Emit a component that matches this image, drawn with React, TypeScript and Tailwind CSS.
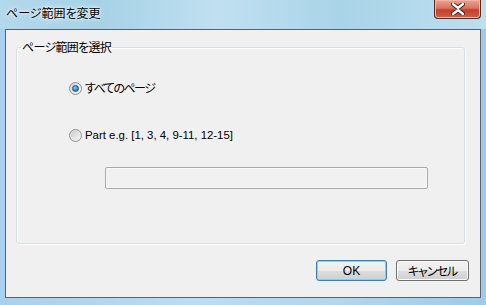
import React from "react";

const jp = "font-['Noto_Sans_CJK_JP','Noto_Sans',sans-serif] [font-feature-settings:'palt']";

function Radio({ checked }: { checked: boolean }) {
	return (
		<span className="flex h-[13px] w-[13px] shrink-0 items-center justify-center rounded-full border border-[#8e8f8f] bg-[linear-gradient(135deg,#d6d6d6,#f7f7f7)]">
			{checked ? (
				<span className="h-[7px] w-[7px] rounded-full border border-[#1a4f84] bg-[radial-gradient(circle_at_40%_35%,#8fd0f5,#2a86c8_60%,#135a9a)]" />
			) : (
				<span className="h-[9px] w-[9px] rounded-full bg-[linear-gradient(135deg,#cfcfcf,#f2f2f2)]" />
			)}
		</span>
	);
}

function Button({ label, primary }: { label: string; primary?: boolean }) {
	return (
		<button
			className={`flex h-[21px] items-center justify-center rounded-[3px] border text-[12px] font-normal text-black ${
				primary
					? "w-[71px] border-[#3c7fb1] font-['Liberation_Sans',Arial,sans-serif] shadow-[inset_0_0_0_1px_#7fd3f7]"
					: `w-[73px] border-[#707070] tracking-[-1px] shadow-[inset_0_0_0_1px_#fbfbfb] ${jp}`
			} bg-[linear-gradient(#f2f2f2_0%,#ebebeb_50%,#dddddd_51%,#cfcfcf_100%)]`}
		>
			{label}
		</button>
	);
}

export default function App() {
	return (
		<div className="flex h-[305px] w-[486px] flex-col overflow-hidden bg-[linear-gradient(90deg,#a9d0ec,#bcdcf1_40%,#b2d6ee_70%,#9fcbea)]">
			{/* title bar */}
			<div className="flex h-[29px] shrink-0 items-start justify-between bg-[linear-gradient(90deg,#b4d8ec,#a6d2e6_20%,#c0e0f1_45%,#a9d4e8_70%,#bddff0)]">
				<span className={`ml-[6px] mt-[5px] text-[12px] leading-[16px] text-black [text-shadow:0_0_6px_#ffffff,0_0_3px_#ffffff] ${jp}`}>
					ページ範囲を変更
				</span>
				<div className="mr-[5px] flex h-[19px] w-[47px] items-center justify-center rounded-b-[4px] border border-t-0 border-[#5b2b22] bg-[linear-gradient(#e9a593,#d8735f_45%,#c2402a_55%,#cf5f45)] shadow-[inset_0_0_0_1px_#f0b3a4]">
					<svg width="14" height="12" viewBox="0 0 14 12">
						<path
							d="M2 1 L7 5 L12 1 M2 11 L7 7 L12 11"
							stroke="#3a2320"
							strokeWidth="4.4"
							fill="none"
							strokeLinecap="round"
						/>
						<path
							d="M2 1 L7 5 L12 1 M2 11 L7 7 L12 11"
							stroke="#ffffff"
							strokeWidth="2.4"
							fill="none"
							strokeLinecap="round"
						/>
					</svg>
				</div>
			</div>

			{/* client area */}
			<div className="mx-[5px] flex h-[269px] shrink-0 flex-col border border-[#57626e] bg-[#f0f0f0]">
				<fieldset className="ml-[10px] mt-[9px] flex h-[205px] w-[449px] flex-col rounded-[3px] border border-[#d5dfe5] px-0 pb-0 shadow-[inset_1px_1px_0_#ffffff,1px_1px_0_#ffffff]">
					<legend className={`ml-[4px] px-[1px] text-[12px] leading-[16px] tracking-[-0.7px] text-black ${jp}`}>
						ページ範囲を選択
					</legend>
					<div className="ml-[52px] mt-[25px] flex h-[16px] items-center gap-[3px]">
						<Radio checked />
						<span className={`text-[12px] leading-[16px] tracking-[-1.5px] text-black ${jp}`}>
							すべてのページ
						</span>
					</div>
					<div className="ml-[52px] mt-[31px] flex h-[16px] items-center gap-[3px]">
						<Radio checked={false} />
						<span className="font-['Liberation_Sans',Arial,sans-serif] text-[11.4px] leading-[16px] text-black">
							Part e.g. [1, 3, 4, 9-11, 12-15]
						</span>
					</div>
					<div className="ml-[88px] mt-[24px] h-[22px] w-[323px] rounded-[2px] border border-[#a9a9a9] bg-[#f1f1f1] shadow-[inset_0_0_0_1px_#f7f7f7]" />
				</fieldset>

				<div className="mr-[11px] mt-[16px] flex justify-end gap-[9px]">
					<Button label="OK" primary />
					<Button label="キャンセル" />
				</div>
			</div>
		</div>
	);
}
